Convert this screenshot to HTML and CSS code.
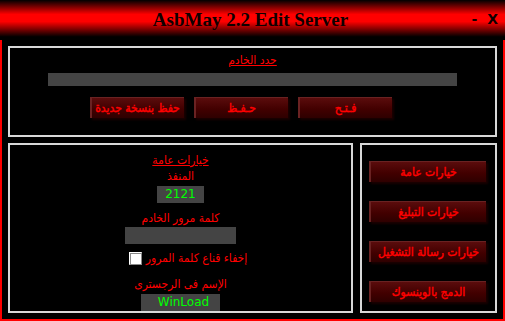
FILE: index.html
```html
<!DOCTYPE html>
<html lang="ar">
<head>
  <meta charset="UTF-8" />
  <meta name="viewport" content="width=device-width, initial-scale=1.0"/>
  <title>AsbMay 2.2 Edit Server</title>
  <link rel="stylesheet" href="styles.css">
</head>
<body>
<div class="window">
  <div class="titlebar">
    <span></span>
    <h1>AsbMay 2.2 Edit Server</h1>
    <div class="controls"><span class="min">-</span><span class="close">X</span></div>
  </div>

  <div class="frame">
    <div class="panel top-panel">
      <a class="link" href="#">حدد الخادم</a>
      <div class="path-field"></div>
      <div class="btn-row">
        <button class="btn">حفظ بنسخة جديدة</button>
        <button class="btn">حـفـظ</button>
        <button class="btn">فـتـح</button>
      </div>
    </div>

    <div class="bottom">
      <div class="panel options">
        <a class="link" href="#">خيارات عامة</a>
        <div class="label port-label">المنفذ</div>
        <div class="field port">2121</div>
        <div class="label pass-label">كلمة مرور الخادم</div>
        <div class="field pass"></div>
        <label class="check-row">
          <input type="checkbox" class="check" />
          <span>إخفاء قناع كلمة المرور</span>
        </label>
        <div class="label reg-label">الإسم فى الرجسترى</div>
        <div class="field reg">WinLoad</div>
      </div>

      <div class="panel menu">
        <button class="btn menu-btn">خيارات عامة</button>
        <button class="btn menu-btn">خيارات التبليغ</button>
        <button class="btn menu-btn">خيارات رسالة التشغيل</button>
        <button class="btn menu-btn">الدمج بالوينسوك</button>
      </div>
    </div>
  </div>
</div>
</body>
</html>
```
FILE: styles.css
```css
* {
  box-sizing: border-box;
}
body {
  margin: 0;
  background: #000;
  font-family: "DejaVu Sans Condensed", "DejaVu Sans", sans-serif;
}
.window {
  width: 505px;
  height: 321px;
  background: #000;
}
.titlebar {
  height: 40px;
  display: grid;
  grid-template-columns: 1fr auto 1fr;
  align-items: center;
  background: linear-gradient(#000 0%, #ff0000 36%, #ff0000 54%, #000 92%, #000 100%);
}
.titlebar h1 {
  margin: 0;
  font-family: "Liberation Serif", serif;
  font-weight: bold;
  font-size: 19px;
  color: #100000;
  padding-right: 4px;
}
.controls {
  justify-self: end;
  display: flex;
  gap: 10px;
  padding-right: 7px;
  margin-top: -3px;
  font-family: "DejaVu Sans", sans-serif;
  font-weight: bold;
  font-size: 14px;
  color: #100000;
}
.frame {
  height: 281px;
  border: 2px solid #ff0000;
  border-top: none;
  padding: 6px 6px 0 6px;
}
.panel {
  border: 2px solid #d8d8d8;
  background: #000;
}
.top-panel {
  height: 91px;
  display: flex;
  flex-direction: column;
  align-items: center;
}
.link {
  color: #ff0000;
  font-size: 12px;
  text-decoration: underline;
  line-height: 13px;
  white-space: nowrap;
}
.top-panel .link {
  margin-top: 6px;
}
.path-field {
  width: 409px;
  height: 13px;
  margin-top: 6px;
  background: #444;
}
.btn-row {
  display: flex;
  gap: 10px;
  margin-top: 11px;
  margin-right: 24px;
}
.btn {
  width: 94px;
  height: 21px;
  padding: 0;
  border: none;
  border-top: 1px solid #6a2222;
  border-left: 2px solid #6a2222;
  background: linear-gradient(#5a0c0c, #420000 55%, #2e0000);
  box-shadow: 2px 2px 2px #1a0000;
  color: #ff0000;
  font-family: "DejaVu Sans Condensed", "DejaVu Sans", sans-serif;
  font-size: 12px;
  -webkit-text-stroke: 0.4px #ff0000;
  white-space: nowrap;
  cursor: pointer;
}
.bottom {
  display: flex;
  gap: 7px;
  margin-top: 6px;
}
.options {
  width: 345px;
  height: 170px;
  display: flex;
  flex-direction: column;
  align-items: center;
}
.options .link {
  margin-top: 9px;
}
.label {
  color: #ff0000;
  font-size: 12px;
  line-height: 13px;
  white-space: nowrap;
}
.port-label {
  margin-top: 3px;
}
.field {
  height: 17px;
  background: #444;
  color: #00ff00;
  font-family: "DejaVu Sans", sans-serif;
  font-size: 12px;
  line-height: 17px;
  text-align: center;
}
.port {
  width: 47px;
  margin-top: 3px;
}
.pass-label {
  margin-top: 9px;
}
.pass {
  width: 111px;
  margin-top: 2px;
}
.check-row {
  display: flex;
  align-items: center;
  gap: 4px;
  margin-top: 8px;
  margin-left: 15px;
  color: #ff0000;
  font-size: 12px;
  line-height: 13px;
  white-space: nowrap;
}
.check {
  appearance: none;
  margin: 0;
  width: 13px;
  height: 13px;
  background: #fff;
  border: 1px solid #888;
  border-top-color: #fff;
  border-left-color: #fff;
  box-shadow: inset 1px 1px 0 #888;
}
.reg-label {
  margin-top: 13px;
}
.reg {
  width: 79px;
  margin-top: 3px;
  padding-left: 6px;
}
.menu {
  width: 137px;
  height: 170px;
  display: flex;
  flex-direction: column;
  align-items: center;
  gap: 19px;
  padding-top: 16px;
}
.menu-btn {
  width: 117px;
  margin-left: -2px;
}
```
